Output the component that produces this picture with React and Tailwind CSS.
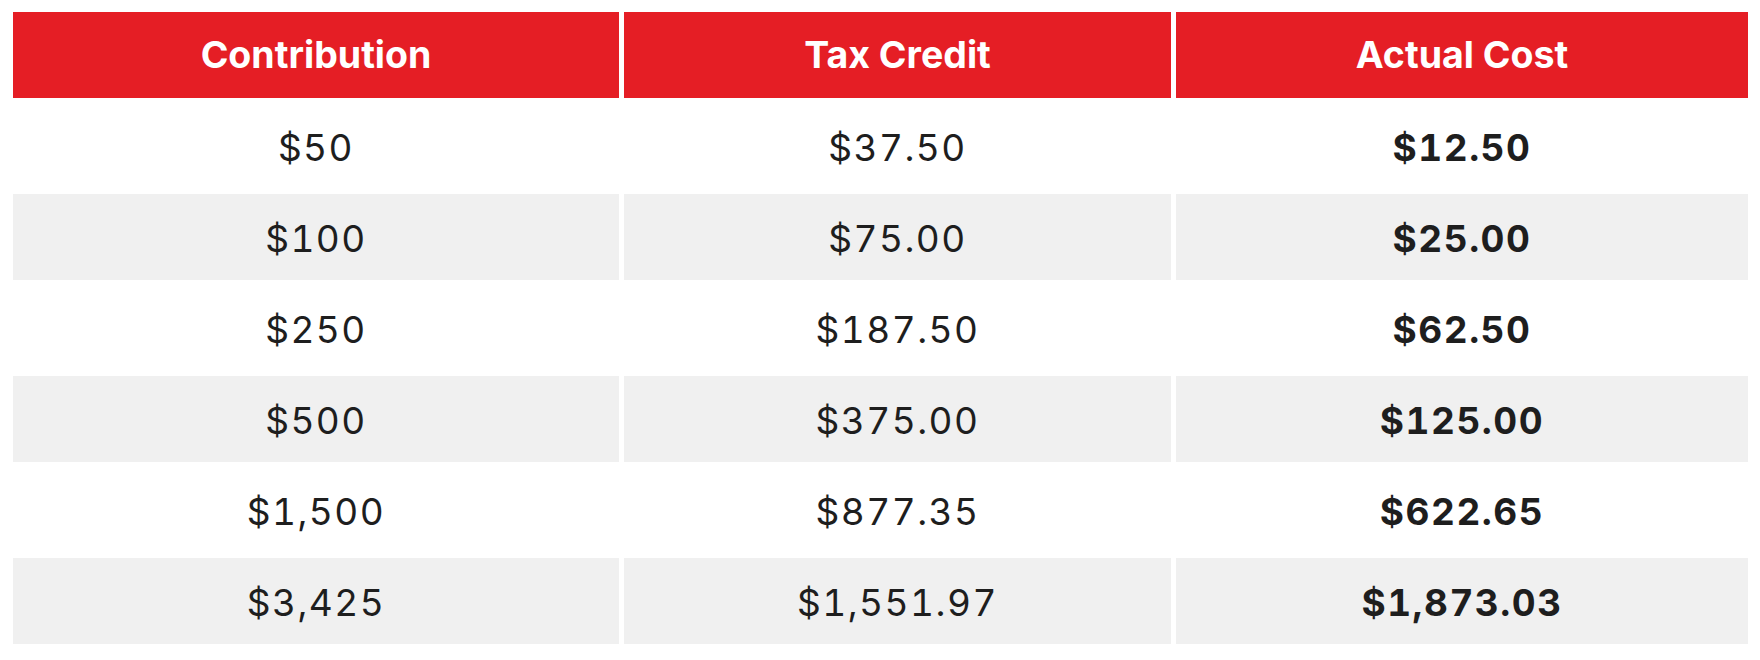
const rows = [
  ['$50', '$37.50', '$12.50'],
  ['$100', '$75.00', '$25.00'],
  ['$250', '$187.50', '$62.50'],
  ['$500', '$375.00', '$125.00'],
  ['$1,500', '$877.35', '$622.65'],
  ['$3,425', '$1,551.97', '$1,873.03'],
];

const headers = ['Contribution', 'Tax Credit', 'Actual Cost'];

export default function App() {
  return (
    <div className="w-[1760px] h-[660px] bg-white pt-3 pl-[13px]">
      <div className="grid grid-cols-[606px_547px_572px] auto-rows-[86px] gap-[5px]">
        {headers.map(h => (
          <div
            key={h}
            className="bg-[#e51e25] flex items-center justify-center text-white font-bold text-[37.5px] font-['Inter',sans-serif]"
          >
            {h}
          </div>
        ))}
        {rows.map((r, i) => r.map((cell, j) => (
          <div
            key={i + '-' + j}
            className={`flex items-center justify-center pt-1 text-[37px] text-[#1e1e1e] tracking-[1.5px] tabular-nums font-['Inter',sans-serif] ${i % 2 === 1 ? 'bg-[#f0f0f0]' : 'bg-white'} ${j === 2 ? 'font-bold' : 'font-normal'}`}
          >
            {cell}
          </div>
        )))}
      </div>
    </div>
  );
}
